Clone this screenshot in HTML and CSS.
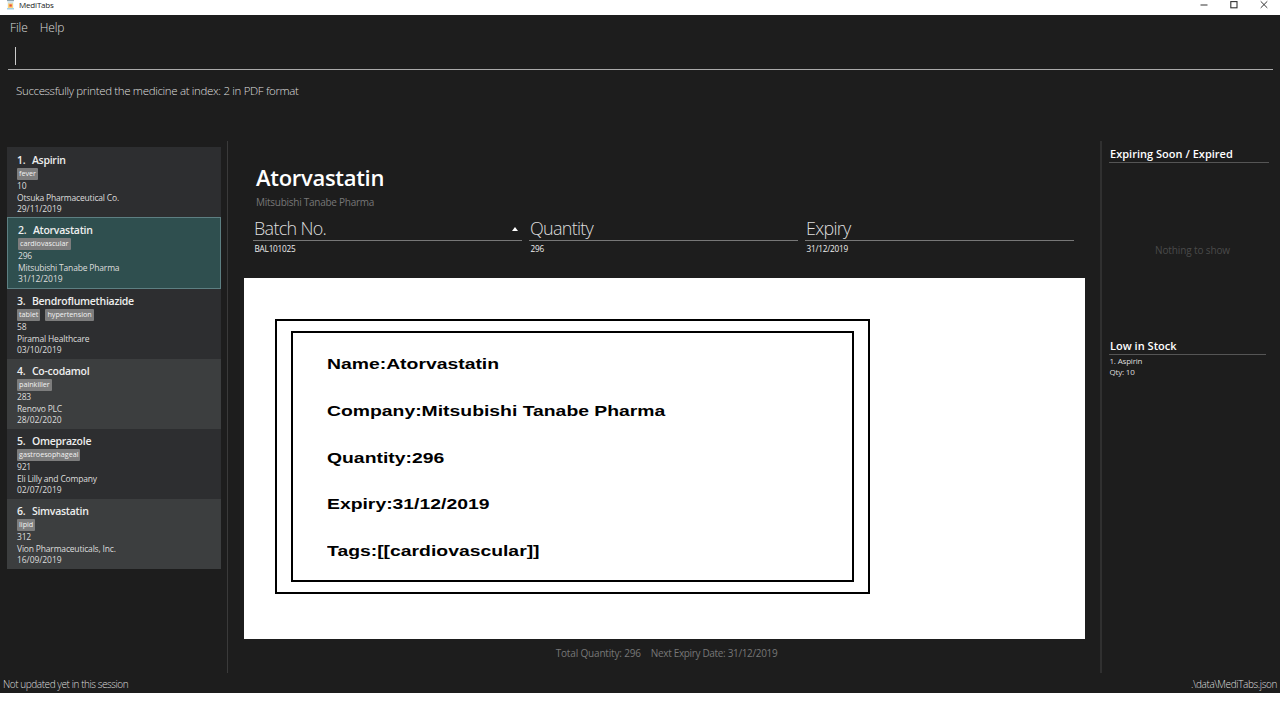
FILE: index.html
```html
<!DOCTYPE html>
<html lang="en">
<head>
<meta charset="utf-8">
<title>MediTabs</title>
<link rel="stylesheet" href="styles.css">
</head>
<body>
<div class="window">
  <header class="titlebar">
    <svg class="app-icon" width="9" height="10" viewBox="0 0 9 10"><rect x="1" y="0" width="7" height="1.2" fill="#8fa3ad"/><rect x="1.7" y="1.2" width="5.6" height="7" fill="#cfe3ea"/><rect x="2" y="3.4" width="5" height="4.6" fill="#f8d27a"/><rect x="3.4" y="4.4" width="2.4" height="2.2" fill="#e8503a"/><rect x="1" y="8.2" width="7" height="1.2" fill="#8fc4dc"/></svg>
    <span class="app-name">MediTabs</span>
    <div class="controls">
      <svg width="8" height="9" viewBox="0 0 8 9"><path d="M0.5 5H7.5" stroke="#555" stroke-width="1.2"/></svg>
      <svg width="8" height="9" viewBox="0 0 8 9"><rect x="0.8" y="1.6" width="6.2" height="6.2" fill="none" stroke="#333" stroke-width="1.1"/></svg>
      <svg width="8" height="9" viewBox="0 0 8 9"><path d="M0.7 1.3L7.3 7.9M7.3 1.3L0.7 7.9" stroke="#333" stroke-width="1"/></svg>
    </div>
  </header>
  <nav class="menu"><span>File</span><span>Help</span></nav>
  <div class="command"><i class="caret"></i></div>
  <div class="result">Successfully printed the medicine at index: 2 in PDF format</div>
  <main class="body">
    <section class="list">
      <article class="card first"><h3><b>1.</b><span>Aspirin</span></h3><div class="tags"><span>fever</span></div><p>10</p><p>Otsuka Pharmaceutical Co.</p><p class="date">29/11/2019</p></article>
      <article class="card selected"><h3><b>2.</b><span>Atorvastatin</span></h3><div class="tags"><span>cardiovascular</span></div><p>296</p><p>Mitsubishi Tanabe Pharma</p><p class="date">31/12/2019</p></article>
      <article class="card"><h3><b>3.</b><span>Bendroflumethiazide</span></h3><div class="tags"><span>tablet</span><span>hypertension</span></div><p>58</p><p>Piramal Healthcare</p><p class="date">03/10/2019</p></article>
      <article class="card alt"><h3><b>4.</b><span>Co-codamol</span></h3><div class="tags"><span>painkiller</span></div><p>283</p><p>Renovo PLC</p><p class="date">28/02/2020</p></article>
      <article class="card"><h3><b>5.</b><span>Omeprazole</span></h3><div class="tags"><span>gastroesophageal</span></div><p>921</p><p>Eli Lilly and Company</p><p class="date">02/07/2019</p></article>
      <article class="card alt"><h3><b>6.</b><span>Simvastatin</span></h3><div class="tags"><span>lipid</span></div><p>312</p><p>Vion Pharmaceuticals, Inc.</p><p class="date">16/09/2019</p></article>
    </section>
    <section class="detail">
      <h1>Atorvastatin</h1>
      <div class="company">Mitsubishi Tanabe Pharma</div>
      <div class="table">
        <div class="col"><div class="th"><span>Batch No.</span><i class="sort"></i></div><div class="td">BAL101025</div></div>
        <div class="col"><div class="th"><span>Quantity</span></div><div class="td">296</div></div>
        <div class="col"><div class="th"><span>Expiry</span></div><div class="td">31/12/2019</div></div>
      </div>
      <div class="page"><div class="outer"><div class="inner">
        <p>Name:Atorvastatin</p>
        <p>Company:Mitsubishi Tanabe Pharma</p>
        <p>Quantity:296</p>
        <p>Expiry:31/12/2019</p>
        <p>Tags:[[cardiovascular]]</p>
      </div></div></div>
      <div class="totals"><span>Total Quantity: 296</span><span>Next Expiry Date: 31/12/2019</span></div>
    </section>
    <aside class="side">
      <section class="expiring"><h2>Expiring Soon / Expired</h2><div class="empty">Nothing to show</div></section>
      <section class="low"><h2>Low in Stock</h2><p>1. Aspirin</p><p>Qty: 10</p></section>
    </aside>
  </main>
  <footer class="status"><span>Not updated yet in this session</span><span class="path">.\data\MediTabs.json</span></footer>
</div>
</body>
</html>
```
FILE: styles.css
```css
* { box-sizing: border-box; margin: 0; padding: 0; }
body { background: #fff; font-family: "Open Sans", "Noto Sans", sans-serif; color: #ddd; width: 1280px; height: 720px; overflow: hidden; }
.window { display: flex; flex-direction: column; width: 1280px; height: 693px; background: #1d1d1d; }
.window > * { flex-shrink: 0; }
.titlebar { display: flex; align-items: flex-start; height: 15px; background: #fff; color: #222; padding-left: 6px; }
.app-name { margin-left: 4px; font-size: 8px; line-height: 10px; letter-spacing: -0.18px; }
.controls { display: flex; gap: 22px; margin-left: auto; padding-right: 12px; }
.menu { display: flex; gap: 12px; height: 27px; padding: 2px 10px 0; font-size: 12px; line-height: 21px; font-weight: 300; letter-spacing: -0.1px; }
.command { height: 28px; margin: 0 7px 0 8px; border-bottom: 1px solid #aaa; padding: 5px 0 0 7px; }
.caret { display: block; width: 1px; height: 18px; background: #ccc; }
.result { height: 71px; padding: 11px 16px 0; font-size: 11.5px; line-height: 20px; font-weight: 300; letter-spacing: -0.34px; }
.body { display: flex; height: 532px; }
.list { width: 228px; padding: 6px 6px 0 7px; border-right: 1px solid #3a3a3a; }
.card { height: 70px; padding: 5px 10px 0; background: #2d2e30; }
.card.first { padding-top: 6px; }
.card.alt { background: #3c3e3f; }
.card.selected { height: 72px; background: #2f4f4f; border: 1px solid #5d7f82; padding: 5px 9px 0 10px; }
.card h3 { display: flex; gap: 6.5px; font-size: 10.5px; line-height: 15px; font-weight: 600; letter-spacing: -0.26px; color: #eee; }
.card h3 b { font-weight: 600; }
.tags { display: flex; gap: 5px; height: 12px; }
.tags span { height: 12px; padding: 0 2px; background: #7d7d7d; border-radius: 1px; font-size: 7.2px; line-height: 11px; color: #f2f2f2; }
.card p { font-size: 8.5px; line-height: 11.5px; letter-spacing: -0.18px; }
.card .date { letter-spacing: -0.06px; }
.detail { width: 872px; padding: 21px 15px 0 16px; }
h1 { padding-left: 12px; font-size: 22px; line-height: 30px; font-weight: 600; letter-spacing: -0.3px; color: #fff; }
.company { padding: 1px 0 0 12px; font-size: 10px; line-height: 18px; letter-spacing: -0.26px; color: #777; }
.table { display: flex; gap: 7px; height: 67px; padding: 6px 0 0 9px; }
.col { width: 269px; }
.th { display: flex; align-items: center; justify-content: space-between; height: 24px; padding: 0 4px 0 1px; border-bottom: 1px solid #777; font-size: 18px; line-height: 23px; font-weight: 300; letter-spacing: -0.72px; }
.sort { border: 3px solid transparent; border-top: 0; border-bottom: 4px solid #fff; }
.td { padding-left: 1.5px; font-size: 8.2px; line-height: 16px; letter-spacing: -0.2px; color: #eee; }
.page { width: 841px; height: 361px; padding: 41px 0 0 31px; background: #fff; }
.outer { width: 595px; height: 275px; padding: 10px 14px; border: 2px solid #000; }
.inner { width: 563px; height: 251px; padding: 8px 34px 0; border: 2px solid #000; }
.inner p { height: 46.8px; font: 700 15px/46px "Liberation Sans", Arial, sans-serif; color: #000; white-space: nowrap; transform: scaleX(1.29); transform-origin: left; }
.totals { display: flex; justify-content: center; gap: 10px; padding: 5px 0 0 4px; font-size: 10px; line-height: 18px; letter-spacing: -0.17px; color: #777; }
.totals span + span { letter-spacing: -0.34px; }
.side { width: 180px; padding: 4px 11px 0 7px; border-left: 2px solid #303030; }
.expiring { height: 192px; }
.side h2 { height: 18px; padding-left: 1px; border-bottom: 1px solid #555; font-size: 11px; line-height: 17px; font-weight: 600; letter-spacing: 0.02px; color: #fff; }
.empty { padding: 78px 0 0 7px; text-align: center; font-size: 10px; line-height: 18px; letter-spacing: -0.13px; color: #4a4a4a; }
.low h2 { margin-right: 3px; }
.low p { padding-left: 0.5px; font-size: 8px; line-height: 11px; letter-spacing: -0.2px; }
.status { display: flex; justify-content: space-between; padding: 2px 3px 0; font-size: 10px; line-height: 18px; font-weight: 300; letter-spacing: -0.43px; }
.path { letter-spacing: -0.38px; }
```
